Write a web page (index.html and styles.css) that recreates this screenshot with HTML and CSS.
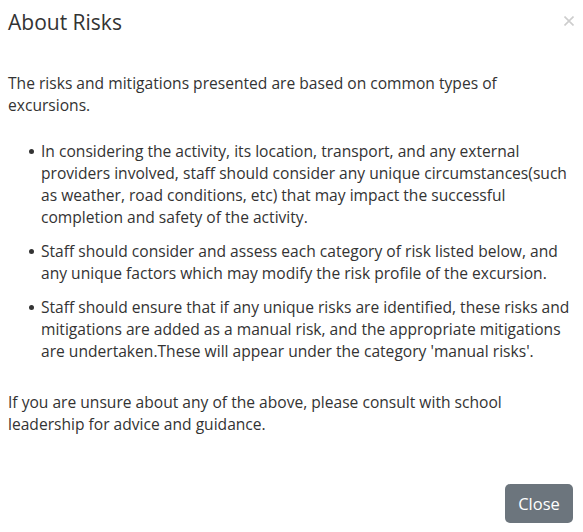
FILE: index.html
```html
<!DOCTYPE html>
<html>
<head>
<meta charset="utf-8">
<link rel="stylesheet" href="styles.css">
</head>
<body>
<div class="modal">
  <div class="modal-header">
    <h4 class="modal-title">About Risks</h4>
    <button class="close" type="button" aria-label="Close"><svg width="10" height="10" viewBox="0 0 10 10"><path d="M0.5 0.5 L9.5 9.5 M9.5 0.5 L0.5 9.5" stroke="#cdcdcd" stroke-width="1.6" fill="none"/></svg></button>
  </div>
  <div class="modal-body">
    <p class="intro">The risks and mitigations presented are based on common types of excursions.</p>
    <ul class="list">
      <li>In considering the activity, its location, transport, and any external providers involved, staff should consider any unique circumstances(such as weather, road conditions, etc) that may impact the successful completion and safety of the activity.</li>
      <li>Staff should consider and assess each category of risk listed below, and any unique factors which may modify the risk profile of the excursion.</li>
      <li>Staff should ensure that if any unique risks are identified, these risks and mitigations are added as a manual risk, and the appropriate mitigations are undertaken.These will appear under the category 'manual risks'.</li>
    </ul>
    <p class="outro">If you are unsure about any of the above, please consult with school leadership for advice and guidance.</p>
  </div>
  <div class="modal-footer">
    <button class="btn" type="button">Close</button>
  </div>
</div>
</body>
</html>
```

FILE: styles.css
```css
* { box-sizing: border-box; }
html, body { margin: 0; padding: 0; background: #fff; }
body {
  font-family: "Open Sans", "Liberation Sans", sans-serif;
  font-size: 15.6px;
  line-height: 22px;
  color: #333;
}
.modal { width: 583px; padding: 0 10px 0 8px; }
.modal-header {
  display: flex;
  justify-content: space-between;
  align-items: flex-start;
  padding-top: 7px;
  height: 72px;
}
.modal-title {
  margin: 0;
  font-size: 21px;
  font-weight: 400;
  line-height: 30px;
}
.close {
  display: block;
  border: 0;
  background: none;
  padding: 0;
  margin: 9px -1px 0 0;
  width: 10px;
  height: 10px;
  cursor: pointer;
}
.close svg { display: block; }
.modal-body p { margin: 0; }
.list {
  list-style: none;
  margin: 24px 0 0 0;
  padding-left: 33px;
}
.list li {
  position: relative;
  margin-bottom: 12px;
}
.list li::before {
  content: "";
  position: absolute;
  left: -12px;
  top: 9px;
  width: 5px;
  height: 5px;
  border-radius: 50%;
  background: #333;
}
.list li:last-child { margin-bottom: 0; }
.modal-body .outro { margin-top: 29px; }
.modal-footer {
  display: flex;
  justify-content: flex-end;
  margin-top: 49px;
}
.btn {
  font-family: "Open Sans", "Liberation Sans", sans-serif;
  font-size: 16.5px;
  line-height: 23px;
  color: #fff;
  background: #6c757d;
  border: 0;
  border-radius: 5px;
  padding: 8px 0;
  height: 39px;
  width: 68px;
}
```
